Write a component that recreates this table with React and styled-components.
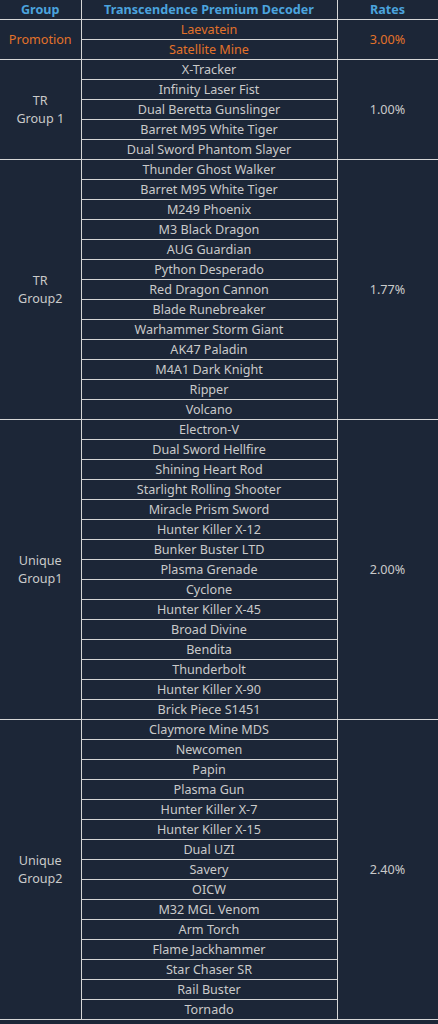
import React from 'react';
import styled, { createGlobalStyle } from 'styled-components';

const GlobalStyle = createGlobalStyle`
  html, body {
    margin: 0;
    padding: 0;
    background: #1c2637;
  }
  body {
    font-family: "Noto Sans", "Open Sans", sans-serif;
  }
`;

const Table = styled.table`
  width: 438px;
  border-collapse: collapse;
  table-layout: fixed;
  background: #1c2637;
  font-size: 12.6px;
  color: #c8c8c8;
`;

const HeadCell = styled.th`
  height: 19px;
  padding: 0;
  font-weight: 700;
  color: #4ba3dd;
  text-align: center;
  line-height: 19px;
  border-right: 1px solid #d6d6d6;
  border-bottom: 1px solid #d6d6d6;
`;

const Cell = styled.td`
  height: 19px;
  padding: 1px 0 0;
  box-sizing: border-box;
  text-align: center;
  line-height: 18px;
  color: ${(p) => (p.$promo ? '#e3722a' : '#cacaca')};
  border-right: 1px solid #d6d6d6;
  border-bottom: 1px solid #d6d6d6;
  white-space: ${(p) => (p.$multi ? 'normal' : 'nowrap')};
`;

const groups = [
  {
    label: ['Promotion'],
    rate: '3.00%',
    promo: true,
    items: ['Laevatein', 'Satellite Mine'],
  },
  {
    label: ['TR', 'Group 1'],
    rate: '1.00%',
    items: [
      'X-Tracker',
      'Infinity Laser Fist',
      'Dual Beretta Gunslinger',
      'Barret M95 White Tiger',
      'Dual Sword Phantom Slayer',
    ],
  },
  {
    label: ['TR', 'Group2'],
    rate: '1.77%',
    items: [
      'Thunder Ghost Walker',
      'Barret M95 White Tiger',
      'M249 Phoenix',
      'M3 Black Dragon',
      'AUG Guardian',
      'Python Desperado',
      'Red Dragon Cannon',
      'Blade Runebreaker',
      'Warhammer Storm Giant',
      'AK47 Paladin',
      'M4A1 Dark Knight',
      'Ripper',
      'Volcano',
    ],
  },
  {
    label: ['Unique', 'Group1'],
    rate: '2.00%',
    items: [
      'Electron-V',
      'Dual Sword Hellfire',
      'Shining Heart Rod',
      'Starlight Rolling Shooter',
      'Miracle Prism Sword',
      'Hunter Killer X-12',
      'Bunker Buster LTD',
      'Plasma Grenade',
      'Cyclone',
      'Hunter Killer X-45',
      'Broad Divine',
      'Bendita',
      'Thunderbolt',
      'Hunter Killer X-90',
      'Brick Piece S1451',
    ],
  },
  {
    label: ['Unique', 'Group2'],
    rate: '2.40%',
    items: [
      'Claymore Mine MDS',
      'Newcomen',
      'Papin',
      'Plasma Gun',
      'Hunter Killer X-7',
      'Hunter Killer X-15',
      'Dual UZI',
      'Savery',
      'OICW',
      'M32 MGL Venom',
      'Arm Torch',
      'Flame Jackhammer',
      'Star Chaser SR',
      'Rail Buster',
      'Tornado',
    ],
  },
];

export default function App() {
  return (
    <>
      <GlobalStyle />
      <Table>
        <colgroup>
          <col style={{ width: 81 }} />
          <col style={{ width: 256 }} />
          <col style={{ width: 101 }} />
        </colgroup>
        <thead>
          <tr>
            <HeadCell>Group</HeadCell>
            <HeadCell>Transcendence Premium Decoder</HeadCell>
            <HeadCell>Rates</HeadCell>
          </tr>
        </thead>
        <tbody>
          {groups.map((g) =>
            g.items.map((item, i) => (
              <tr key={g.label.join() + i}>
                {i === 0 && (
                  <Cell rowSpan={g.items.length} $promo={g.promo} $multi>
                    {g.label.map((l, k) => (
                      <React.Fragment key={k}>
                        {k > 0 && <br />}
                        {l}
                      </React.Fragment>
                    ))}
                  </Cell>
                )}
                <Cell $promo={g.promo}>{item}</Cell>
                {i === 0 && (
                  <Cell rowSpan={g.items.length} $promo={g.promo}>
                    {g.rate}
                  </Cell>
                )}
              </tr>
            ))
          )}
        </tbody>
      </Table>
    </>
  );
}
